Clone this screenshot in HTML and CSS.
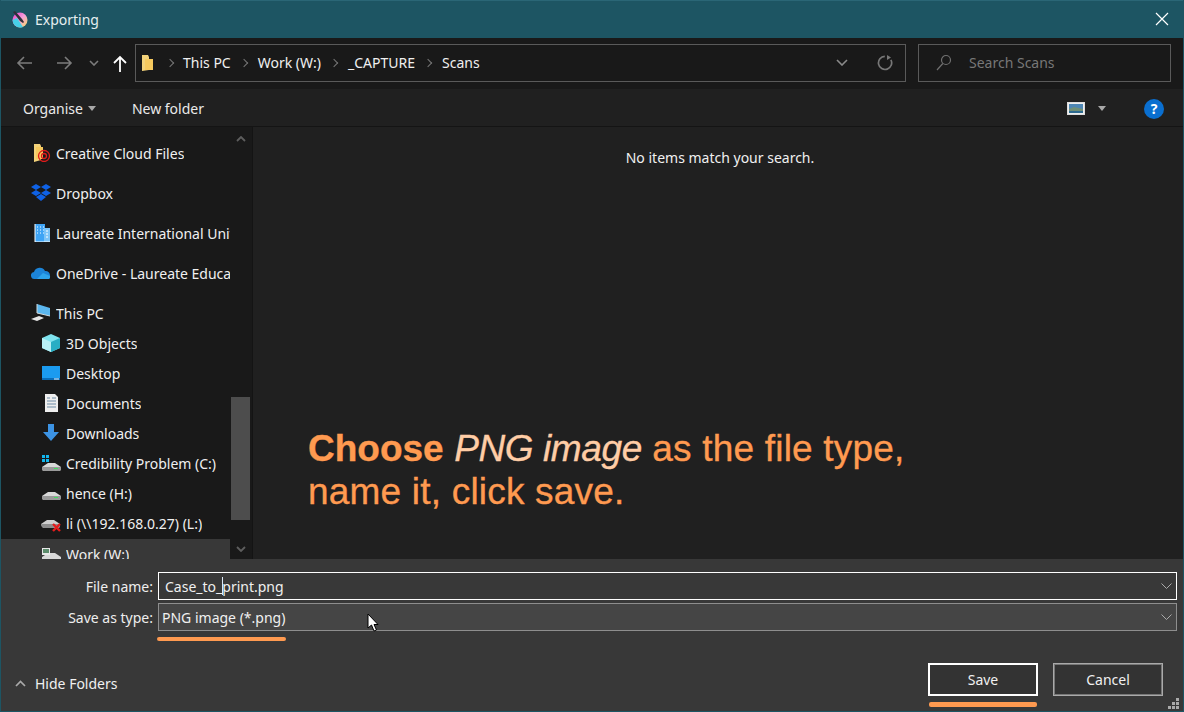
FILE: index.html
```html
<!DOCTYPE html>
<html lang="en">
<head>
<meta charset="utf-8">
<title>Exporting</title>
<link rel="stylesheet" href="styles.css">
</head>
<body>
<div class="window">
  <header class="titlebar">
    <svg class="app-icon" width="18" height="18" viewBox="0 0 18 18"><defs><linearGradient id="k" x1="0" y1="0" x2="1" y2="1"><stop offset="0" stop-color="#e838d0"/><stop offset=".5" stop-color="#f4a0d8"/><stop offset="1" stop-color="#f5e060"/></linearGradient></defs><circle cx="9" cy="10" r="7.5" fill="url(#k)"/><path d="M1.6 10A7.5 7.5 0 0 0 9 17.5 7.5 7.5 0 0 0 12 17L6 8Z" fill="#46d0e8"/><path d="M2 2l2-1 7 8 2 3-1 1-3-2z" fill="#30303a"/></svg>
    <span class="title">Exporting</span>
    <svg class="close" width="14" height="14" viewBox="0 0 14 14"><path d="M1 1l12 12M13 1L1 13" stroke="#fff" stroke-width="1.2"/></svg>
  </header>

  <nav class="navbar">
    <div class="nav-buttons">
      <svg width="18" height="14" viewBox="0 0 18 14"><path d="M16 7H2M8 1L2 7l6 6" fill="none" stroke="#7c7c7c" stroke-width="1.6"/></svg>
      <svg class="nav-forward" width="18" height="14" viewBox="0 0 18 14"><path d="M2 7h14M10 1l6 6-6 6" fill="none" stroke="#7c7c7c" stroke-width="1.6"/></svg>
      <svg class="nav-recent" width="10" height="6" viewBox="0 0 10 6"><path d="M1 1l4 4 4-4" fill="none" stroke="#7c7c7c" stroke-width="1.6"/></svg>
      <svg class="nav-up" width="14" height="18" viewBox="0 0 14 18"><path d="M7 17V2M1 8l6-6 6 6" fill="none" stroke="#fff" stroke-width="1.8"/></svg>
    </div>
    <div class="address">
      <svg class="crumb-folder" width="13" height="18" viewBox="0 0 13 18"><path d="M1 1h6l1 2v13l-7 1z" fill="#f3d27a"/><path d="M4 5h8v11H4z" fill="#f6c95e"/></svg>
      <span class="sep first-sep"></span><span class="crumb first-crumb">This PC</span>
      <span class="sep"></span><span class="crumb">Work (W:)</span>
      <span class="sep"></span><span class="crumb">_CAPTURE</span>
      <span class="sep"></span><span class="crumb">Scans</span>
      <svg class="addr-chev" width="12" height="7" viewBox="0 0 12 7"><path d="M1 1l5 5 5-5" fill="none" stroke="#8a8a8a" stroke-width="1.6"/></svg>
      <svg class="addr-refresh" width="16" height="16" viewBox="0 0 16 16"><path d="M4 2.6A6.6 6.6 0 1 0 11 2" fill="none" stroke="#777" stroke-width="1.7" transform="rotate(35 8 8)"/><path d="M10 0v5l4-2.500z" fill="#777"/></svg>
    </div>
    <div class="search">
      <svg width="16" height="17" viewBox="0 0 16 17"><circle cx="10" cy="6" r="4.500" fill="none" stroke="#707070" stroke-width="1.200"/><path d="M6.800 9.500L1 16" stroke="#707070" stroke-width="1.200"/></svg>
      <span>Search Scans</span>
    </div>
  </nav>

  <div class="toolbar">
    <span class="tool organise">Organise</span><i class="caret"></i>
    <span class="tool newfolder">New folder</span>
    <svg class="view-icon" width="18" height="13" viewBox="0 0 18 13"><rect x=".5" y=".5" width="17" height="12" fill="#eee" stroke="#ddd"/><rect x="2" y="2" width="14" height="9" fill="#4d86b4"/><path d="M2 7l5-2 9 2v2H2z" fill="#6f8f78"/><rect x="2" y="9" width="14" height="2" fill="#2d6a90"/></svg>
    <i class="caret view-caret"></i>
    <span class="help">?</span>
  </div>

  <div class="body">
    <aside class="sidebar">
      <ul class="tree">
        <li class="row top">
          <svg class="ico" width="20" height="18" viewBox="0 0 20 18"><path d="M3 0h6l1 2v14l-7 2z" fill="#f3d27a"/><path d="M5 3h7v12H5z" fill="#f6c95e"/><circle cx="13" cy="12" r="5.500" fill="none" stroke="#e01b1b" stroke-width="1.300"/><circle cx="13" cy="12" r="2.500" fill="none" stroke="#e01b1b" stroke-width="1.300"/></svg>
          <span class="name">Creative Cloud Files</span>
        </li>
        <li class="row top">
          <svg class="ico" width="20" height="18" viewBox="0 0 20 18"><path d="M5 0l5 3-5 3-5-3zM15 0l5 3-5 3-5-3zM5 6l5 3-5 3-5-3zM15 6l5 3-5 3-5-3zM10 10l5 3-5 4-5-4z" fill="#0f62e6"/></svg>
          <span class="name">Dropbox</span>
        </li>
        <li class="row top">
          <svg class="ico" width="20" height="18" viewBox="0 0 20 18"><rect x="4" y="0" width="10" height="18" fill="#3fa4f5"/><rect x="13" y="4" width="6" height="14" fill="#7cc4f8"/><path d="M4 0v18h15M6 3h1M9 3h1M12 3h1M6 6h1M9 6h1M12 6h1M6 9h1M9 9h1M12 9h1M15 7h2M15 10h2M15 13h2" stroke="#fff" stroke-width="1" fill="none"/></svg>
          <span class="name">Laureate International University</span>
        </li>
        <li class="row top">
          <svg class="ico" width="20" height="18" viewBox="0 0 20 18"><path d="M4 15a3.500 3.500 0 0 1-1-7 6 6 0 0 1 11-1 4.500 4.500 0 0 1 5 5 3 3 0 0 1-1 3z" fill="#1c84d8"/><path d="M6 15l6-6 7 3a3 3 0 0 1-1 3z" fill="#2ea4ec"/></svg>
          <span class="name">OneDrive - Laureate Education</span>
        </li>
        <li class="row top this-pc">
          <svg class="ico" width="20" height="18" viewBox="0 0 20 18"><path d="M6 0l13 4v8L6 9z" fill="#5bb7ef"/><path d="M6 0v9l13 3" fill="none" stroke="#cfd8dc"/><path d="M0 15l8-3 5 2-7 3z" fill="#e6e6e6"/></svg>
          <span class="name">This PC</span>
        </li>
        <li class="row sub">
          <svg class="ico" width="20" height="18" viewBox="0 0 20 18"><path d="M10 0l9 4v10l-9 4-9-4V4z" fill="#7fe3ee"/><path d="M10 8l9-4v10l-9 4z" fill="#28aec4"/><path d="M10 8L1 4v10l9 4z" fill="#b8f0f6"/></svg>
          <span class="name">3D Objects</span>
        </li>
        <li class="row sub">
          <svg class="ico" width="20" height="16" viewBox="0 0 20 16"><rect x="1" y="1" width="18" height="13" fill="#1b9bf0"/><rect x="1" y="13" width="18" height="2" fill="#0a6cb8"/><path d="M13 14h5" stroke="#eaf6ff"/></svg>
          <span class="name">Desktop</span>
        </li>
        <li class="row sub">
          <svg class="ico" width="20" height="18" viewBox="0 0 20 18"><path d="M4 0h10l3 3v15H4z" fill="#eeeeee"/><path d="M6 4h3M11 4h4M6 7h9M6 10h9M6 13h9" stroke="#6d8ba6"/></svg>
          <span class="name">Documents</span>
        </li>
        <li class="row sub">
          <svg class="ico" width="20" height="18" viewBox="0 0 20 18"><path d="M7 0h6v8h5l-8 9-8-9h5z" fill="#3c93e4"/></svg>
          <span class="name">Downloads</span>
        </li>
        <li class="row sub">
          <svg class="ico" width="20" height="18" viewBox="0 0 20 18"><path d="M1 1h3v3H1zM5 1h3v3H5zM1 5h3v3H1zM5 5h3v3H5z" fill="#12b6ee"/><path d="M1 13l6-4h7l6 4v3l-2 1H3l-2-1z" fill="#d8d8d8"/><path d="M1 13h19v3l-2 1H3l-2-1z" fill="#9a9a9a"/><rect x="13" y="14" width="4" height="1" fill="#40e060"/></svg>
          <span class="name">Credibility Problem (C:)</span>
        </li>
        <li class="row sub">
          <svg class="ico" width="20" height="18" viewBox="0 0 20 18"><path d="M1 12l6-4h7l6 4v3l-2 1H3l-2-1z" fill="#d8d8d8"/><path d="M1 12h19v3l-2 1H3l-2-1z" fill="#9a9a9a"/><rect x="13" y="13" width="4" height="1" fill="#40e060"/></svg>
          <span class="name">hence (H:)</span>
        </li>
        <li class="row sub">
          <svg class="ico" width="20" height="18" viewBox="0 0 20 18"><path d="M0 10l6-4h7l6 4v3l-2 1H3l-2-1z" fill="#cfcfcf"/><path d="M0 10h19v3l-2 1H3l-2-1z" fill="#8e8e8e"/><path d="M12 10l7 7M19 10l-7 7" stroke="#e41c1c" stroke-width="2.400"/></svg>
          <span class="name">li (\\192.168.0.27) (L:)</span>
        </li>
        <li class="row sub selected">
          <svg class="ico" width="20" height="18" viewBox="0 0 20 18"><path d="M1 12l6-4h7l6 4v3l-2 1H3l-2-1z" fill="#d8d8d8"/><rect x="1" y="3" width="8" height="7" fill="#e8e8e8"/><rect x="2" y="4" width="6" height="4" fill="#5c8c6c"/></svg>
          <span class="name">Work (W:)</span>
        </li>
      </ul>
      <div class="scrollbar">
        <svg class="arrow arrow-up" width="10" height="6" viewBox="0 0 10 6"><path d="M1 5l4-4 4 4" fill="none" stroke="#5e5e5e" stroke-width="1.800"/></svg>
        <div class="track"><div class="thumb"></div></div>
        <svg class="arrow" width="10" height="6" viewBox="0 0 10 6"><path d="M1 1l4 4 4-4" fill="none" stroke="#5e5e5e" stroke-width="1.800"/></svg>
      </div>
    </aside>
    <main class="pane">
      <p class="empty">No items match your search.</p>
      <p class="note"><b>Choose</b> <em>PNG image</em> as the file type,<br>name it, click save.</p>
    </main>
  </div>

  <footer class="footer">
    <div class="fields">
      <label class="flabel">File name:</label>
      <div class="combo focus"><span class="fname">Case_to_<i class="cursor-bar"></i>print.png</span><svg width="11" height="6" viewBox="0 0 11 6"><path d="M.500.500l5 5 5-5" fill="none" stroke="#aaa"/></svg></div>
      <label class="flabel">Save as type:</label>
      <div class="combo type"><span>PNG image (*.png)</span><svg width="11" height="6" viewBox="0 0 11 6"><path d="M.500.500l5 5 5-5" fill="none" stroke="#aaa"/></svg></div>
    </div>
    <div class="actions">
      <div class="hide"><svg width="11" height="7" viewBox="0 0 11 7"><path d="M1 6l4.500-4.500L10 6" fill="none" stroke="#aaa" stroke-width="1.700"/></svg><span>Hide Folders</span></div>
      <button class="btn primary">Save</button>
      <button class="btn cancel">Cancel</button>
    </div>
    <i class="mark mark-type"></i>
    <i class="mark mark-save"></i>
    <svg class="pointer" width="12" height="19" viewBox="0 0 12 19"><path d="M1 1v14l3.500-3 2.500 6 2.500-1-2.500-5.500H11z" fill="#fff" stroke="#000"/></svg>
    <svg class="grip" width="11" height="11" viewBox="0 0 11 11"><path d="M8 0h3v3H8zM4 4h3v3H4zM8 4h3v3H8zM0 8h3v3H0zM4 8h3v3H4zM8 8h3v3H8z" fill="#aaa"/></svg>
  </footer>
</div>
</body>
</html>
```

FILE: styles.css
```css
* { box-sizing: border-box; }
html, body { margin: 0; padding: 0; }
body { width: 1184px; height: 712px; overflow: hidden; font-family: "Noto Sans", "Open Sans", sans-serif; font-size: 14px; color: #f0f0f0; }
.window { width: 1184px; height: 712px; display: flex; flex-direction: column; background: #1d5563; padding: 0 1px 1px; position: relative; }

.titlebar { height: 38px; flex: none; display: flex; align-items: center; padding: 0 14px 0 10px; color: #e6eef0; box-shadow: inset 0 1px 0 #2a6676; }
.app-icon { flex: none; }
.title { margin-left: 6px; font-size: 14px; }
.close { margin-left: auto; }

.navbar { height: 51px; flex: none; background: #191919; display: flex; align-items: center; padding: 0 12px 2px 15px; }
.nav-buttons { display: flex; align-items: center; width: 119px; flex: none; }
.nav-forward { margin-left: 21px; }
.nav-recent { margin-left: 16px; }
.nav-up { margin-left: 14px; margin-top: 2px; }
.address { flex: none; width: 771px; height: 38px; border: 1px solid #5a5a5a; display: flex; align-items: center; padding-left: 5px; }
.crumb-folder { flex: none; }
.sep { flex: none; width: 6px; height: 6px; border-top: 1.500px solid #777; border-right: 1.500px solid #777; transform: rotate(45deg); margin-left: 10px; }
.first-sep { margin-left: 13px; }
.crumb { margin-left: 11px; font-size: 14px; white-space: nowrap; }
.first-crumb { margin-left: 10px; }
.addr-chev { margin-left: auto; }
.addr-refresh { margin: 0 12px 0 29px; }
.search { flex: none; margin-left: 12px; width: 253px; height: 38px; border: 1px solid #5a5a5a; display: flex; align-items: center; padding-left: 17px; color: #777; gap: 17px; }

.toolbar { height: 38px; flex: none; background: #202020; display: flex; align-items: center; border-bottom: 1px solid #141414; padding: 2px 19px 0 22px; }
.tool { color: #eaeaea; }
.caret { width: 0; height: 0; border-left: 4.500px solid transparent; border-right: 4.500px solid transparent; border-top: 5px solid #a8a8a8; margin-left: 5px; }
.newfolder { margin-left: 36px; }
.view-icon { margin-left: auto; }
.view-caret { margin-left: 13px; }
.help { margin-left: 38px; width: 20px; height: 20px; border-radius: 50%; background: #0a6fd0; color: #fff; font-weight: 700; font-size: 14px; display: flex; align-items: center; justify-content: center; }

.body { flex: 1; display: flex; min-height: 0; background: #202020; }
.sidebar { width: 252px; flex: none; background: #191919; display: flex; overflow: hidden; border-right: 1px solid #141414; }
.tree { list-style: none; margin: 0; padding: 6px 0 0; width: 229px; flex: none; overflow: hidden; }
.row { display: flex; align-items: center; height: 40px; white-space: nowrap; overflow: hidden; }
.row.top { padding-left: 30px; }
.row.sub { height: 30px; padding-left: 40px; }
.row.this-pc { height: 30px; margin-top: 5px; }
.ico { flex: none; }
.name { margin-left: 5px; overflow: hidden; color: #f0f0f0; }
.selected { background: #383838; margin-top: 1px; }
.scrollbar { width: 20px; margin-left: 1px; flex: none; display: flex; flex-direction: column; align-items: center; }
.arrow { flex: none; margin: 8px 0 7px; }
.arrow-up { margin-top: 9px; margin-bottom: 6px; }
.track { flex: 1; width: 100%; display: flex; flex-direction: column; }
.thumb { width: 19px; height: 123px; margin-top: 249px; background: #4d4d4d; }

.pane { flex: 1; min-width: 0; padding-top: 21px; }
.empty { margin: 0; padding-left: 4px; text-align: center; font-size: 14px; color: #f0f0f0; }
.note { margin: 260px 0 0 55px; font-family: "Liberation Sans", Arial, sans-serif; font-size: 37px; line-height: 43px; color: #ff9a50; letter-spacing: .2px; -webkit-text-stroke: .35px #ff9a50; }
.note b { letter-spacing: 0; }
.note em { color: #ffcda6; letter-spacing: -.4px; -webkit-text-stroke: .35px #ffcda6; }

.footer { height: 152px; flex: none; background: #383838; position: relative; padding: 13px 6px 0 0; }
.fields { display: grid; grid-template-columns: 157px 1fr; row-gap: 3px; align-items: center; }
.flabel { text-align: right; padding-right: 5px; color: #eee; }
.combo { height: 28px; display: flex; align-items: center; justify-content: space-between; padding: 0 4px 0 3px; border: 1px solid #fff; background: #383838; }
.combo svg { flex: none; }
.combo.focus .fname { padding-left: 3px; }
.combo.type { background: #454545; border-color: #8e8e8e; }
.cursor-bar { display: inline-block; width: 1px; height: 18px; background: #dce8f5; margin-right: -1px; vertical-align: -3px; }
.actions { display: flex; align-items: center; margin-top: 32px; padding-left: 14px; }
.hide { display: flex; align-items: center; gap: 9px; margin-top: 7px; margin-right: auto; }
.btn { width: 110px; height: 33px; font: inherit; color: #f0f0f0; background: #333; }
.btn.primary { border: 2px solid #fff; }
.btn.cancel { border: 1px solid #aaa; margin-left: 15px; margin-right: 14px; box-shadow: inset 0 0 0 1px #777; }

.mark { position: absolute; background: #ff9a50; border-radius: 2px; }
.mark-type { left: 156px; top: 78px; width: 129px; height: 4px; }
.mark-save { left: 928px; top: 143px; width: 108px; height: 5px; }
.pointer { position: absolute; left: 366px; top: 54px; }
.grip { position: absolute; right: 4px; bottom: 2px; }
```
